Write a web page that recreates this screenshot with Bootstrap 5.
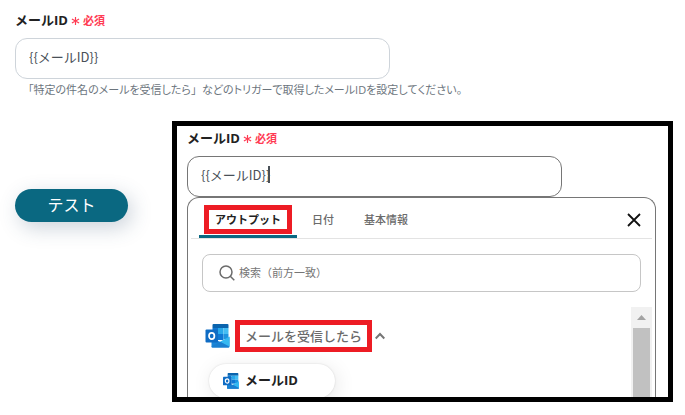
<!DOCTYPE html>
<html lang="ja">
<head>
<meta charset="utf-8">
<meta name="viewport" content="width=device-width, initial-scale=1">
<title>メールID</title>
<link href="https://cdn.jsdelivr.net/npm/bootstrap@5.3.0/dist/css/bootstrap.min.css" rel="stylesheet">
<style>
body{font-family:"Open Sans","Noto Sans CJK JP",sans-serif;color:#222;background:#fff;overflow-x:hidden}
.page{padding:11px 12px 13px 15px}
.field-label{font-size:13px;line-height:18px;font-weight:700;margin-bottom:9px;display:flex;gap:3px;white-space:nowrap}
.req{font-size:11px;font-weight:600;color:#ff3b53;display:flex;align-items:center;gap:3px;padding-top:2px;line-height:16px}
.field-box{width:100%;max-width:375px;position:relative}
.field-box .form-control{height:41px;border-radius:12px;border-color:#ced4da;padding:0 13px 4px;font-size:13px;color:#495057;font-family:"Noto Sans CJK JP",sans-serif}
.field-box.active .form-control{border-color:#767676}
.caret{position:absolute;left:81px;top:10px;width:2px;height:17px;background:#495057}
.help{font-size:11px;line-height:18px;margin:2px 0 22px 13px;color:#6c757d;font-feature-settings:"palt";font-kerning:none}
.help span{font-feature-settings:normal}
.stage{gap:44px}
.test-btn{width:113px;height:33px;margin-top:68px;padding:0;border-radius:17px;background:#0a6881;color:#fff;font-size:16px;line-height:33px;border:0;box-shadow:4px 6px 20px rgba(50,80,110,.25)}
.test-btn:hover{background:#085a70;color:#fff}
.panel{border:5px solid #000;padding:3px 12px 0 10px;height:281px;overflow:hidden}
.picker{border:1px solid #767676;border-bottom:0;border-radius:12px 12px 0 0;height:220px;background:#fff}
.tabs{margin:0 3px;padding:0 11px 0 8px;border-bottom:1px solid #e3e3e3}
.tab{border:0;background:none;padding:12px 10px 6px;border-bottom:3px solid transparent;font-size:11px;line-height:19px;font-weight:500;color:#6b6b6b}
.tab span{display:block;padding:0 5px}
.tab.on{color:#222;font-weight:700;border-bottom-color:#0a6881;border-radius:3px 3px 0 0}
.marked{outline:5px solid #ed1c24}
.tab.on .marked{padding:0 6px}
.x-btn{border:0;background:none;padding:0;width:14px;height:14px;display:flex;margin:4px 0 0 auto}
.search{margin:15px 14px 0;height:38px;border:1px solid #c6c6c6;border-radius:8px;padding:0 16px;gap:4px}
.search input{border:0;outline:0;padding:0;font-size:11px;color:#767676;background:none}
.search input::placeholder{color:#767676}
.list-area{margin:15px 3px 0;padding-left:14px;height:90px;overflow:hidden}
.group{padding-top:13px}
.group-title{border:0;background:none;padding:0;height:32px;font-size:13px;line-height:22px;font-weight:500;color:#6b6b6b}
.group-title .marked{padding:0 5px;margin:0 8px 0 10px}
.chip{border:0;background:#fff;height:34px;width:126px;margin:12px 0 0 4px;padding:0 14px;border-radius:17px;gap:6px;font-size:13px;font-weight:700;color:#222;box-shadow:0 0 2px rgba(0,0,0,.14),2px 4px 20px rgba(0,0,0,.1)}
.track{width:21px;background:#f1f1f1;padding:0 2px}
.arrow-cell{height:21px}
.thumb{background:#c1c1c1}
svg{flex:none}
</style>
<script src="https://cdn.jsdelivr.net/npm/bootstrap@5.3.0/dist/js/bootstrap.bundle.min.js"></script>
</head>
<body>
<svg width="0" height="0" class="position-absolute" aria-hidden="true">
<symbol id="outlook" viewBox="0 0 24 24">
<path fill="#0a64ad" d="M8 0h14a1 1 0 0 1 1 1v3H7V1a1 1 0 0 1 1-1z"/>
<path fill="#0f78d4" d="M7 4h5.500v6H7z"/><path fill="#28a8ea" d="M12.500 4H18v6h-5.500z"/><path fill="#45bdf3" d="M18 4h5v6h-5z"/>
<path fill="#0a5aa8" d="M7 10h5.500v6H7z"/><path fill="#0f78d4" d="M12.500 10H18v6h-5.500z"/><path fill="#1d93df" d="M18 10h5v5h-5z"/>
<path fill="#1a86d9" d="M6 14l9 4 9-5v9.500a1 1 0 0 1-1 1H7a1 1 0 0 1-1-1z"/>
<path fill="#35b8f1" d="M24 12.500v10L14.500 17.800z"/>
<path fill="#1a7fd0" d="M6 22.500l8.500-4.700 9.300 5.200a1 1 0 0 1-.8.500H7a1 1 0 0 1-1-1z"/>
<rect x="0" y="5.500" width="12.500" height="13" rx="1" fill="#0f6cc4"/>
<ellipse cx="6.200" cy="12" rx="2.700" ry="3.100" fill="none" stroke="#fff" stroke-width="1.700"/>
</symbol>
<symbol id="star" viewBox="0 0 10 10"><path d="M5 .5v9M1 2.700l8 4.600M9 2.700L1 7.300" stroke="#ff3b53" stroke-width="1.300" fill="none"/></symbol>
</svg>
<main class="page">
  <label class="field-label" for="mail-id">メールID<span class="req"><svg width="9" height="10"><use href="#star"/></svg>必須</span></label>
  <div class="field-box"><input class="form-control" id="mail-id" type="text" value="{{メールID}}"></div>
  <p class="help">「特定の件名のメールを受信したら<span>」</span>などのトリガーで取得したメールIDを設定してください。</p>
  <div class="stage d-flex align-items-start">
    <button type="button" class="btn test-btn flex-shrink-0">テスト</button>
    <section class="panel flex-grow-1">
      <label class="field-label" for="mail-id-edit">メールID<span class="req"><svg width="9" height="10"><use href="#star"/></svg>必須</span></label>
      <div class="field-box active"><input class="form-control" id="mail-id-edit" type="text" value="{{メールID}}"><span class="caret"></span></div>
      <div class="picker">
        <div class="tabs d-flex align-items-start" role="tablist">
          <button type="button" class="tab on" role="tab" aria-selected="true"><span class="marked">アウトプット</span></button>
          <button type="button" class="tab" role="tab" aria-selected="false"><span>日付</span></button>
          <button type="button" class="tab" role="tab" aria-selected="false"><span>基本情報</span></button>
          <button type="button" class="x-btn align-self-center" aria-label="閉じる"><svg width="14" height="14" viewBox="0 0 14 14"><path d="M1 1l12 12M13 1L1 13" stroke="#111" stroke-width="1.800"/></svg></button>
        </div>
        <div class="search d-flex align-items-center">
          <svg width="16" height="16" viewBox="0 0 16 16" fill="none" stroke="#6b6b6b" stroke-width="1.500"><circle cx="7" cy="7" r="6"/><path d="M11.300 11.300l4 4"/></svg>
          <input class="flex-grow-1" type="text" aria-label="検索" placeholder="検索（前方一致）">
        </div>
        <div class="list-area d-flex">
          <div class="group flex-grow-1">
            <button type="button" class="group-title d-flex align-items-center" aria-expanded="true"><svg width="25" height="24"><use href="#outlook"/></svg><span class="marked">メールを受信したら</span><svg width="10" height="8" viewBox="0 0 10 8" fill="none" stroke="#767676" stroke-width="2"><path d="M.7 6.500L5 2l4.300 4.500"/></svg></button>
            <button type="button" class="chip d-flex align-items-center"><svg width="16" height="16"><use href="#outlook"/></svg>メールID</button>
          </div>
          <div class="track d-flex flex-column">
            <div class="arrow-cell d-flex align-items-center justify-content-center"><svg width="9" height="5" viewBox="0 0 9 5"><path d="M0 5L4.500 0 9 5z" fill="#a3a3a3"/></svg></div>
            <div class="thumb flex-grow-1"></div>
          </div>
        </div>
      </div>
    </section>
  </div>
</main>
</body>
</html>
